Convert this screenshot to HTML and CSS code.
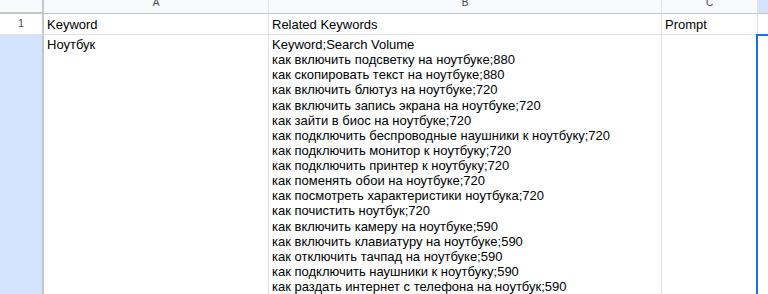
FILE: index.html
```html
<!DOCTYPE html>
<html lang="ru">
<head>
    <meta charset="UTF-8">
    <title>Sheet</title>
    <link rel="stylesheet" href="styles.css">
</head>
<body>
    <div class="sheet">
        <!-- заголовки столбцов -->
        <div class="corner"></div>
        <div class="col-head">A</div>
        <div class="col-head">B</div>
        <div class="col-head">C</div>
        <div class="col-head active"></div>

        <!-- строка 1 -->
        <div class="row-head">1</div>
        <div class="cell bottom">Keyword</div>
        <div class="cell bottom">Related Keywords</div>
        <div class="cell bottom">Prompt</div>
        <div class="cell bottom"></div>

        <!-- строка 2 -->
        <div class="row-head active"></div>
        <div class="cell">Ноутбук</div>
        <div class="cell wrap">Keyword;Search Volume
как включить подсветку на ноутбуке;880
как скопировать текст на ноутбуке;880
как включить блютуз на ноутбуке;720
как включить запись экрана на ноутбуке;720
как зайти в биос на ноутбуке;720
как подключить беспроводные наушники к ноутбуку;720
как подключить монитор к ноутбуку;720
как подключить принтер к ноутбуку;720
как поменять обои на ноутбуке;720
как посмотреть характеристики ноутбука;720
как почистить ноутбук;720
как включить камеру на ноутбуке;590
как включить клавиатуру на ноутбуке;590
как отключить тачпад на ноутбуке;590
как подключить наушники к ноутбуку;590
как раздать интернет с телефона на ноутбук;590
как сделать скриншот на ноутбуке;590</div>
        <div class="cell"></div>
        <div class="cell selected"></div>
    </div>
</body>
</html>
```

FILE: styles.css
```css
* {
    box-sizing: border-box;
}

html, body {
    margin: 0;
    height: 100%;
    overflow: hidden;
    background: #fff;
}

body {
    font-family: "Liberation Sans", Arial, sans-serif;
    font-size: 13px;
    color: #000;
}

.sheet {
    display: grid;
    grid-template-columns: 44px 225px 393px 96px 100px;
    grid-template-rows: 20px 21px 300px;
    margin-top: -6px;
}

.corner,
.col-head,
.row-head {
    background: #f8f9fa;
    color: #444746;
    border-right: 1px solid #c4c7c5;
    border-bottom: 1px solid #c4c7c5;
}

.corner {
    border-right-width: 2px;
    border-bottom-width: 2px;
}

.col-head {
    font-size: 10px;
    text-align: center;
    line-height: 17px;
    border-right-color: #e1e1e1;
}

.row-head {
    font-size: 10px;
    text-align: center;
    padding-top: 4px;
    border-right-width: 2px;
    background: #fff;
    border-bottom-color: #e1e1e1;
}

.col-head.active,
.row-head.active {
    background: #d3e3fd;
}

.cell {
    border-right: 1px solid #e1e1e1;
    border-bottom: 1px solid #e1e1e1;
    padding: 2px 3px;
    line-height: 15px;
    white-space: nowrap;
    overflow: hidden;
}

.cell.bottom {
    display: flex;
    align-items: flex-end;
    padding-bottom: 2px;
}

.cell.wrap {
    white-space: pre-line;
    line-height: 15.13px;
}

.cell.selected {
    border-left: 2px solid #1a73e8;
    border-top: 2px solid #1a73e8;
    margin-left: -2px;
    margin-top: -1px;
}
```
